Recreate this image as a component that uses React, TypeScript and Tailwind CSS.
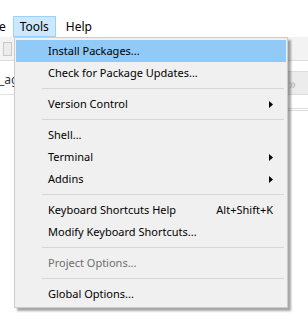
import { ReactNode } from "react";

type Item =
  | { kind: "item"; label: string; active?: boolean; disabled?: boolean; sub?: boolean; shortcut?: string }
  | { kind: "sep" };

const items: Item[] = [
  { kind: "item", label: "Install Packages...", active: true },
  { kind: "item", label: "Check for Package Updates..." },
  { kind: "sep" },
  { kind: "item", label: "Version Control", sub: true },
  { kind: "sep" },
  { kind: "item", label: "Shell..." },
  { kind: "item", label: "Terminal", sub: true },
  { kind: "item", label: "Addins", sub: true },
  { kind: "sep" },
  { kind: "item", label: "Keyboard Shortcuts Help", shortcut: "Alt+Shift+K" },
  { kind: "item", label: "Modify Keyboard Shortcuts..." },
  { kind: "sep" },
  { kind: "item", label: "Project Options...", disabled: true },
  { kind: "sep" },
  { kind: "item", label: "Global Options..." },
];

function Arrow() {
  return (
    <svg width="4" height="7" viewBox="0 0 4 7" className="block">
      <path d="M0 0 L4 3.5 L0 7 Z" fill="#000" />
    </svg>
  );
}

function Row({ children, active }: { children: ReactNode; active?: boolean }) {
  return (
    <div
      className={
        "h-[22px] flex items-center pl-[32px] pr-[12px] " +
        (active ? "bg-[#91c9f7]" : "")
      }
    >
      {children}
    </div>
  );
}

export default function App() {
  return (
    <div
      className="relative w-[308px] h-[324px] bg-white overflow-hidden text-[11px] text-[#000]"
      style={{ fontFamily: '"Segoe UI", "Noto Sans", "Open Sans", sans-serif' }}
    >
      {/* window behind */}
      <div className="h-[16px]" />
      <div className="h-[21px] flex items-center text-[12px]">
        <span className="pr-[7px] -ml-[1px]">e</span>
        <div className="h-[21px] w-[43px] flex items-center justify-center bg-[#cce8ff] border border-[#99d1ff]">
          Tools
        </div>
        <span className="ml-[10px]">Help</span>
      </div>
      <div className="h-[24px] bg-[#f3f3f3] border-b border-[#dcdcdc] flex items-center pl-[3px]">
        <div className="w-[9px] h-[14px] border border-[#c8c8c8] bg-[#ececec]" />
      </div>
      <div className="h-[34px] flex items-end border-b border-[#e0e0e0]">
        <span className="pb-[5px] -ml-[1px] text-[12px] text-[#333]">_ag</span>
      </div>
      <div className="flex justify-end">
        <div className="w-[21px] h-[24px] bg-[#ececec] border-y border-[#dedede] -mt-[24px] flex items-center pl-[2px] text-[#bbb] text-[14px]">
          »
        </div>
      </div>
      <div className="flex justify-end mt-[13px]">
        <div className="w-[21px] border-b border-[#dcdcdc] h-[3px] border-t" />
      </div>

      {/* dropdown menu */}
      <div className="absolute left-[14px] top-[37px] w-[274px] bg-[#f0f0f0] border border-[#cccccc] pt-[2px] pb-[2px] px-[1px] shadow-[3px_3px_2px_rgba(0,0,0,0.35)]">
        {items.map((it, i) =>
          it.kind === "sep" ? (
            <div key={i} className="h-[9px] flex items-center pl-[26px] pr-[2px]">
              <div className="h-[1px] w-full bg-[#d7d7d7]" />
            </div>
          ) : (
            <Row key={i} active={it.active}>
              <span className={"flex-1 " + (it.disabled ? "text-[#6d6d6d]" : "")}>{it.label}</span>
              {it.shortcut && <span className="mr-[1px]">{it.shortcut}</span>}
              {it.sub && (
                <span className="mr-[1px]">
                  <Arrow />
                </span>
              )}
            </Row>
          )
        )}
      </div>
    </div>
  );
}
